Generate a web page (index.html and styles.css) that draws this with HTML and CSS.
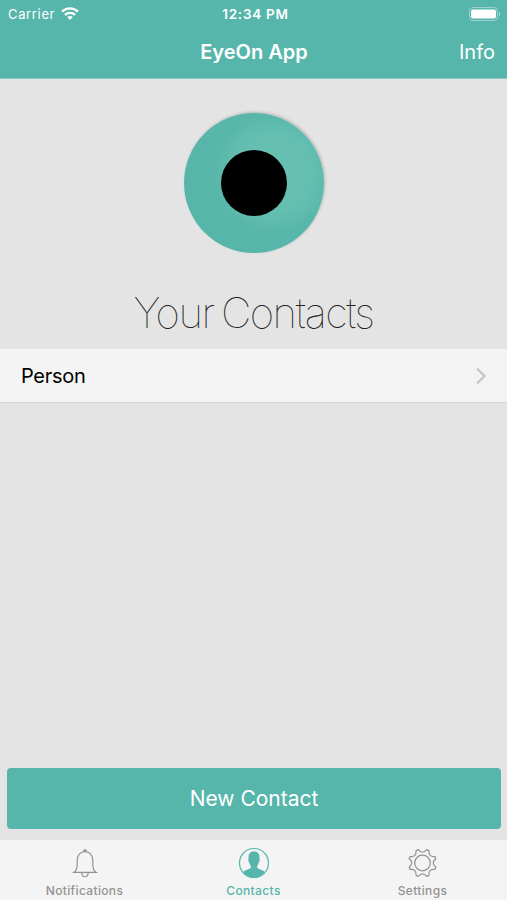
FILE: index.html
```html
<!DOCTYPE html>
<html lang="en">
<head>
    <meta charset="UTF-8">
    <meta name="viewport" content="width=device-width, initial-scale=1.0">
    <title>EyeOn App</title>
    <link rel="stylesheet" href="styles.css">
</head>
<body>
    <header>
        <div class="status-bar">
            <div class="carrier">
                <span>Carrier</span>
                <svg class="wifi" width="18" height="14" viewBox="0 0 18 14" fill="none" stroke="#fff" stroke-width="2.2">
                    <path d="M1 4.600C5.500.2 12.500.2 17 4.600"/>
                    <path d="M3.900 7.900c2.900-2.800 7.300-2.800 10.200 0"/>
                    <path d="M9 13l-2.800-2.900c1.600-1.500 4-1.500 5.600 0z" fill="#fff" stroke="none"/>
                </svg>
            </div>
            <div class="time">12:34 PM</div>
            <svg class="battery" width="32" height="14" viewBox="0 0 32 14">
                <rect x=".5" y=".5" width="28" height="13" rx="3.500" fill="none" stroke="#fff" stroke-opacity=".4"/>
                <rect x="2" y="2.500" width="25" height="9" rx="2" fill="#fff"/>
                <path d="M30 4.800c1.600.7 1.600 3.700 0 4.400z" fill="#fff" fill-opacity=".5"/>
            </svg>
        </div>
        <nav>
            <h1>EyeOn App</h1>
            <a class="info">Info</a>
        </nav>
    </header>
    <main>
        <div class="eye">
            <div class="pupil"></div>
        </div>
        <h2>Your Contacts</h2>
        <ul class="contact-list">
            <li>
                <span>Person</span>
                <svg width="12" height="18" viewBox="0 0 12 18" fill="none" stroke="#c6c6c8" stroke-width="2.3">
                    <path d="M2 1.500L9.500 9L2 16.500"/>
                </svg>
            </li>
        </ul>
        <button class="new-contact">New Contact</button>
    </main>
    <footer>
        <div class="tab">
            <svg width="32" height="32" viewBox="0 0 32 32" fill="none" stroke="#929292" stroke-width="1.200">
                <path d="M4.800 25.400c2.400-1.700 3.400-3.500 3.400-7.400v-4.500c0-5.300 3.100-8.800 7.800-8.800s7.800 3.500 7.800 8.800V18c0 3.900 1 5.700 3.400 7.400z"/>
                <path d="M14.500 4.400c0-2 3-2 3 0" stroke-width="1.500"/>
                <path d="M12.900 26c.2 5 6 5 6.200 0"/>
            </svg>
            <span>Notifications</span>
        </div>
        <div class="tab active">
            <svg width="32" height="32" viewBox="0 0 32 32">
                <circle cx="16" cy="16" r="14.500" fill="none" stroke="#56b6ab" stroke-width="1.200"/>
                <path d="M5.300 25c1.300-2 5.400-2.500 7-3.800.7-.6.700-1.400.5-2.400-1-.9-1.300-2.100-1.500-3.300-.9-.5-1.300-2.900-.7-3.500-.7-5 1.400-7.600 5.400-7.600s6.100 2.600 5.400 7.600c.6.600.2 3-.7 3.500-.2 1.200-.5 2.400-1.500 3.300-.2 1-.2 1.800.5 2.400 1.600 1.300 5.700 1.800 7 3.800-2.500 3.300-6.300 5.500-10.700 5.500S7.800 28.300 5.300 25z" fill="#56b6ab"/>
            </svg>
            <span>Contacts</span>
        </div>
        <div class="tab">
            <svg width="32" height="32" viewBox="-15.500 -16 32 32" fill="none" stroke="#929292" stroke-width="1.200" stroke-linejoin="round">
                <path d="M-4.210-13.350Q0-8.200 4.210-13.350L6.460-12.420Q5.800-5.800 12.420-6.460L13.350-4.210Q8.200 0 13.350 4.210L12.420 6.460Q5.800 5.800 6.460 12.420L4.210 13.350Q0 8.200-4.210 13.350L-6.460 12.420Q-5.800 5.800-12.420 6.460L-13.350 4.210Q-8.200 0-13.350-4.210L-12.420-6.460Q-5.800-5.800-6.460-12.420Z"/>
                <circle r="7.800"/>
            </svg>
            <span>Settings</span>
        </div>
    </footer>
</body>
</html>
```
FILE: styles.css
```css
* {
    box-sizing: border-box;
}
body {
    font-family: Inter, "Liberation Sans", sans-serif;
    background-color: #e4e4e4;
    margin: 0;
    height: 900px;
    display: flex;
    flex-direction: column;
    overflow: hidden;
}
header {
    height: 79px;
    background-color: #56b6ab;
    border-bottom: 1px solid #8fc9c1;
    color: white;
}
.status-bar {
    display: grid;
    grid-template-columns: 1fr auto 1fr;
    align-items: center;
    height: 27px;
    padding: 0 6px 0 8px;
    font-size: 13px;
}
.carrier {
    display: flex;
    align-items: center;
    gap: 6px;
    letter-spacing: 0.65px;
}
.time {
    padding-left: 2px;
    font-size: 13.5px;
    font-weight: 600;
    letter-spacing: 0.75px;
}
.battery {
    justify-self: end;
}
nav {
    display: grid;
    grid-template-columns: 1fr auto 1fr;
    align-items: center;
    height: 50px;
    padding: 0 12px 0 13px;
}
h1 {
    grid-column: 2;
    margin: 0;
    font-size: 20px;
    font-weight: 600;
}
.info {
    justify-self: end;
    font-size: 20px;
}
main {
    flex: 1;
    display: flex;
    flex-direction: column;
}
.eye {
    display: flex;
    align-items: center;
    justify-content: center;
    align-self: center;
    width: 140px;
    height: 140px;
    margin-top: 34px;
    border-radius: 50%;
    background: radial-gradient(circle at 64% 43%, #69c2b4 0%, #64bfb1 32%, #58b7aa 50%, #54b4a7 100%);
    box-shadow: 1px -1px 3px rgba(0, 0, 0, 0.2);
}
.pupil {
    width: 66px;
    height: 66px;
    border-radius: 50%;
    background-color: black;
}
h2 {
    margin: 30px 0 0;
    height: 66px;
    line-height: 60px;
    font-size: 42px;
    font-weight: 100;
    letter-spacing: -1.5px;
    word-spacing: -3px;
    text-align: center;
    color: #222;
}
.contact-list {
    list-style: none;
    margin: 0;
    padding: 0;
}
.contact-list li {
    display: flex;
    align-items: center;
    justify-content: space-between;
    height: 54px;
    padding: 0 20px 0 21px;
    background-color: #f4f4f4;
    border-bottom: 1px solid #d5d5d5;
    font-size: 20px;
    letter-spacing: -0.3px;
}
.new-contact {
    height: 61px;
    margin: auto 6px 11px 7px;
    border: none;
    border-radius: 4px;
    background-color: #56b6ab;
    color: white;
    font-family: inherit;
    font-size: 21px;
}
footer {
    display: flex;
    height: 60px;
    background-color: #f4f4f4;
}
.tab {
    flex: 1;
    display: flex;
    flex-direction: column;
    align-items: center;
    padding-top: 7px;
    color: #929292;
    font-size: 12px;
    font-weight: 500;
    line-height: 14px;
}
.tab span {
    margin-top: 5px;
    letter-spacing: 0.35px;
}
.active {
    color: #56b6ab;
}
```
